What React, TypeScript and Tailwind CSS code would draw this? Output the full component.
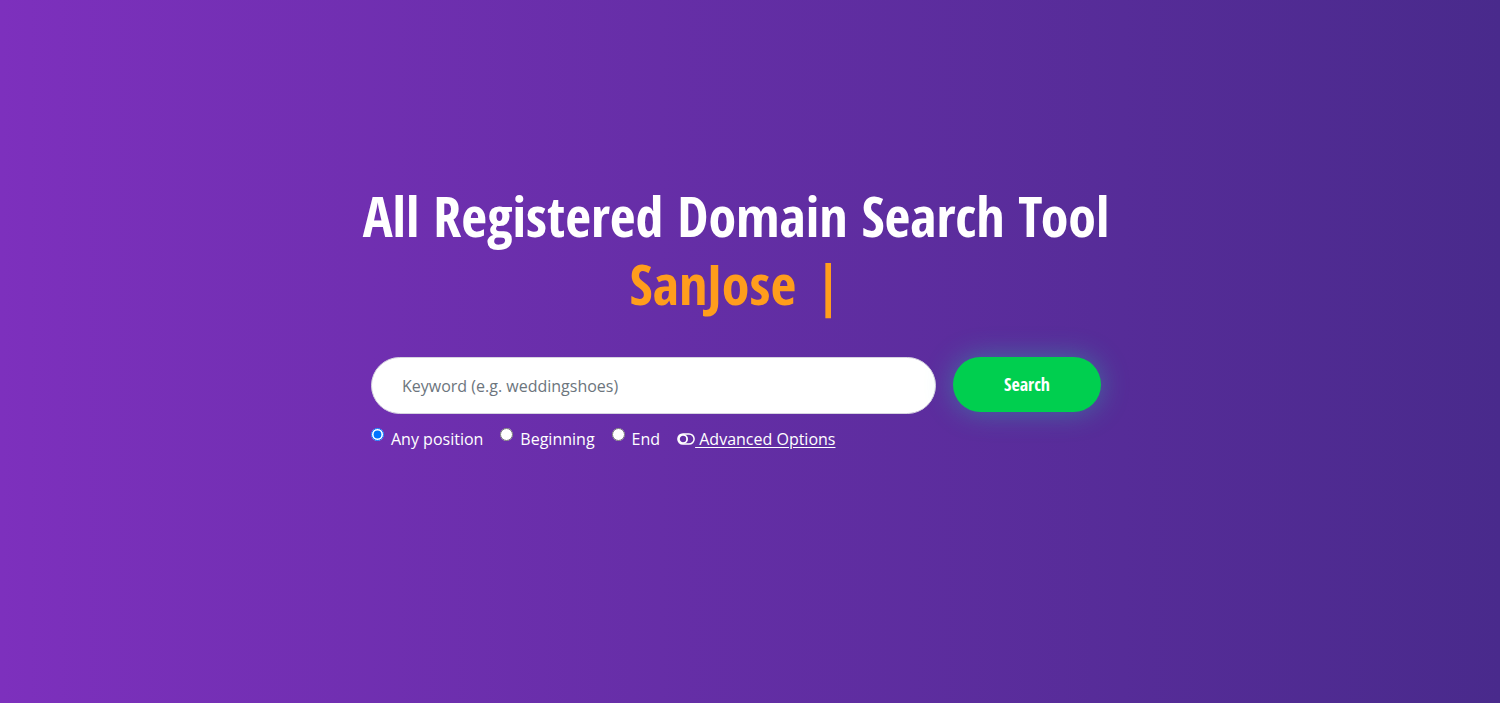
import React, { useState } from 'react';

const positions = [
  { id: 'any', label: 'Any position' },
  { id: 'begin', label: 'Beginning' },
  { id: 'end', label: 'End' },
];

export default function App() {
  const [keyword, setKeyword] = useState('');
  const [position, setPosition] = useState('any');

  return (
    <div className="min-h-[703px] w-full bg-gradient-to-r from-[#7d30bd] to-[#492a8c] flex flex-col items-center pr-[28px] pt-[181px] font-['Open_Sans',sans-serif]">
      <h1 className="text-center text-white font-bold text-[56px] leading-[68px] font-['Open_Sans_Condensed','Roboto_Condensed',sans-serif]">
        All Registered Domain Search Tool
        <br />
        <span className="text-[#ff9d1c]">
          SanJose <span className="ml-[4px]">|</span>
        </span>
      </h1>

      <div className="mt-[40px] w-[730px]">
        <div className="flex items-start gap-[17px]">
          <input
            type="text"
            value={keyword}
            onChange={(e) => setKeyword(e.target.value)}
            placeholder="Keyword (e.g. weddingshoes)"
            className="w-[565px] h-[57px] rounded-full bg-white border border-[#d6d3e0] px-[30px] text-[16px] text-[#495057] placeholder:text-[#6c757d] outline-none"
          />
          <button className="w-[148px] h-[55px] rounded-full bg-[#00cf4f] text-white font-bold text-[18px] font-['Open_Sans_Condensed','Roboto_Condensed',sans-serif] shadow-[0_0_28px_rgba(40,190,170,0.45)]">
            Search
          </button>
        </div>

        <div className="mt-[13px] flex items-start text-white text-[16px] leading-6">
          {positions.map((p) => (
            <label key={p.id} className="flex items-start mr-[17px] cursor-pointer">
              <input
                type="radio"
                name="position"
                checked={position === p.id}
                onChange={() => setPosition(p.id)}
                className="m-0 mt-[1px] mr-[7px] w-[13px] h-[13px]"
              />
              <span>{p.label}</span>
            </label>
          ))}
          <a href="#" className="flex items-start">
            <svg width="18" height="12" viewBox="0 0 18 12" className="mt-[6px]" fill="none" stroke="white">
              <rect x="0.9" y="0.9" width="16.2" height="10.2" rx="5.1" strokeWidth="1.5" />
              <circle cx="6" cy="6" r="4.1" strokeWidth="1.8" />
            </svg>
            <span className="underline underline-offset-2 whitespace-pre"> Advanced Options</span>
          </a>
        </div>
      </div>
    </div>
  );
}
